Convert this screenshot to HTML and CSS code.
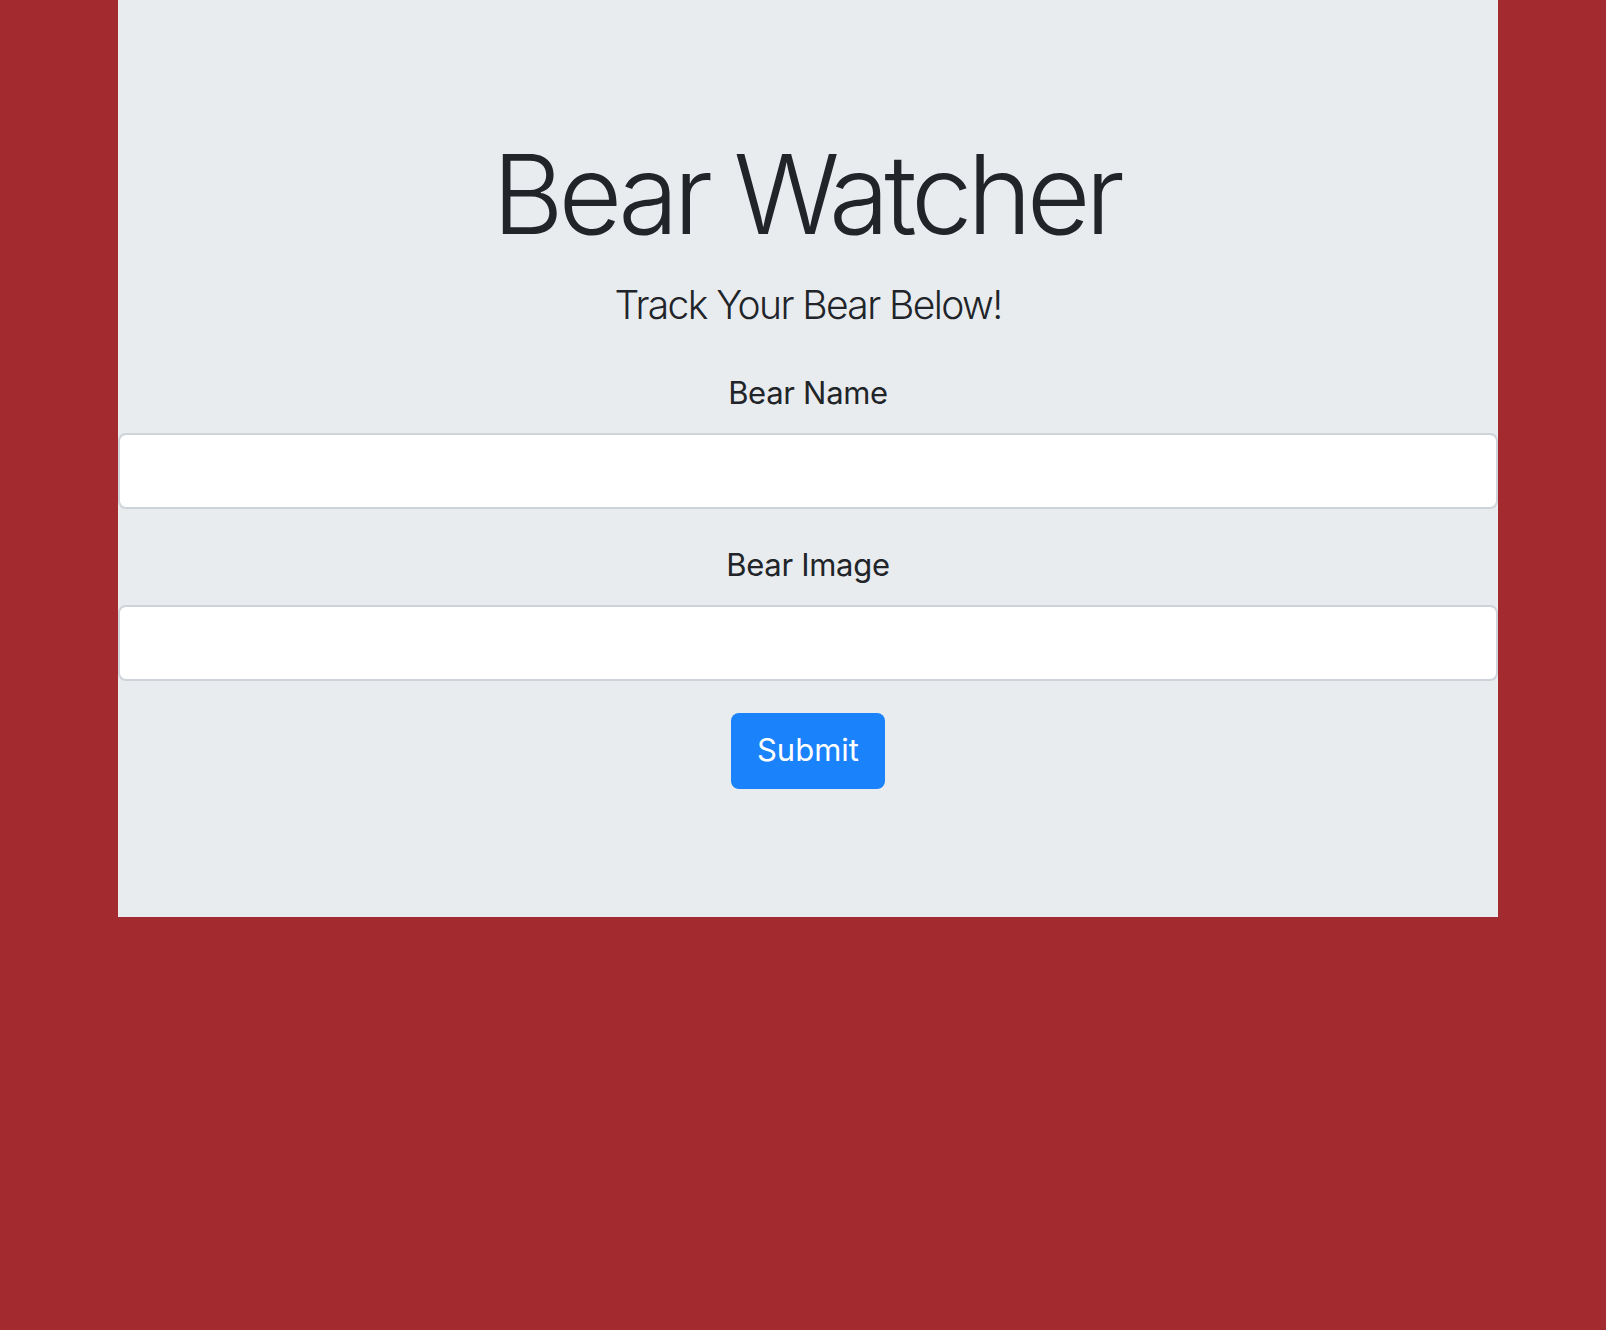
FILE: index.html
```html
<!DOCTYPE html>
<html lang="en">
<head>
<meta charset="utf-8">
<title>Bear Watcher</title>
<link rel="stylesheet" href="styles.css">
</head>
<body>
<div class="jumbotron">
  <h1 class="title">Bear Watcher</h1>
  <p class="lead">Track Your Bear Below!</p>
  <form class="bear-form">
    <div class="form-group">
      <label for="bearName">Bear Name</label>
      <input type="text" id="bearName" class="form-control">
    </div>
    <div class="form-group">
      <label for="bearImage">Bear Image</label>
      <input type="text" id="bearImage" class="form-control">
    </div>
    <button type="button" class="btn-submit">Submit</button>
  </form>
</div>
</body>
</html>
```

FILE: styles.css
```css
html, body {
  margin: 0;
  padding: 0;
}
body {
  background: #a32a2e;
  min-height: 1330px;
  font-family: Inter, "Noto Sans", "Liberation Sans", sans-serif;
  color: #212529;
}
.jumbotron {
  margin-left: 118px;
  width: 1380px;
  background: #e9ecef;
  padding: 128px 0 128px;
  box-sizing: border-box;
  text-align: center;
}
.title {
  margin: 0 0 16px;
  font-size: 110px;
  font-weight: 300;
  line-height: 1.2;
  letter-spacing: -5.2px;
  text-indent: -4px;
}
.lead {
  margin: 0 0 34px;
  font-size: 39px;
  font-weight: 300;
  line-height: 1.5;
  letter-spacing: -1.6px;
}
.bear-form {
  display: flex;
  flex-direction: column;
  align-items: center;
}
.form-group {
  display: flex;
  flex-direction: column;
  align-items: center;
  width: 100%;
  margin-bottom: 32px;
}
.form-group label {
  font-size: 31px;
  line-height: 48px;
  margin-bottom: 16px;
  letter-spacing: -0.3px;
}
.form-control {
  display: block;
  width: 100%;
  height: 76px;
  box-sizing: border-box;
  border: 2px solid #ced4da;
  border-radius: 8px;
  background: #fff;
  font-size: 32px;
  padding: 12px 24px;
  margin: 0;
  outline: none;
}
.btn-submit {
  width: 154px;
  height: 76px;
  border: none;
  border-radius: 8px;
  background: #1a82fb;
  color: #fff;
  font-family: Inter, "Noto Sans", "Liberation Sans", sans-serif;
  font-size: 31px;
  font-weight: 400;
  padding: 0 0 2px;
  cursor: pointer;
}
```
